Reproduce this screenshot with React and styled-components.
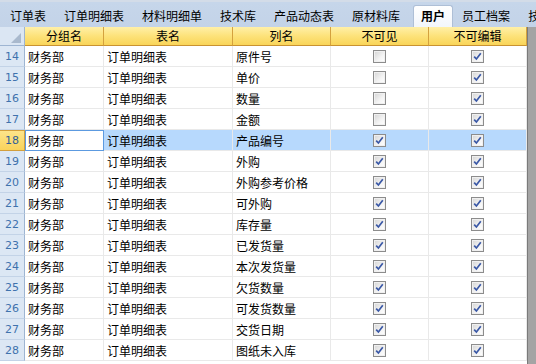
import React from "react";
import styled, { createGlobalStyle } from "styled-components";

const GlobalStyle = createGlobalStyle`
  html, body {
    margin: 0;
    padding: 0;
    background: #ffffff;
    overflow: hidden;
  }
  body {
    font-family: "Noto Sans CJK SC", "Liberation Sans", sans-serif;
    font-size: 12px;
  }
`;

const Page = styled.div`
  width: 536px;
  height: 364px;
  display: flex;
  flex-direction: column;
  overflow: hidden;
`;

const TabBar = styled.div`
  height: 27px;
  flex: none;
  display: flex;
  align-items: flex-end;
  padding-left: 1px;
  background: linear-gradient(#d3dce8 0, #d3dce8 2px, #c6d6ea 2px, #c3d3e8 100%);
  white-space: nowrap;
  overflow: hidden;
`;

const Tab = styled.div`
  flex: none;
  height: 21px;
  line-height: 20px;
  padding: 0 9px;
  color: #000;
  box-sizing: border-box;
`;

const ActiveTab = styled(Tab)`
  height: 22px;
  padding: 0 7px;
  margin-left: 4px;
  font-weight: 700;
  border-radius: 3px 3px 0 0;
  background: linear-gradient(#ffffff, #f2f6fb);
  border: 1px solid #aebfd6;
  border-bottom: none;
`;

const Body = styled.div`
  flex: 1;
  display: flex;
  min-height: 0;
`;

const Grid = styled.div`
  width: 527px;
  flex: none;
  display: flex;
  flex-direction: column;
  overflow: hidden;
`;

const ScrollStrip = styled.div`
  flex: 1;
  background: #a4a4a4;
  border-left: 1px solid #7a7a7a;
`;

const COLS = "25px 79px 129px 98px 98px 98px";

const HeaderRow = styled.div`
  display: grid;
  grid-template-columns: ${COLS};
  height: 19px;
  flex: none;
`;

const Corner = styled.div`
  position: relative;
  box-sizing: border-box;
  background: #dbe6f3;
  border-right: 1px solid #9eb5d2;
  border-bottom: 1px solid #9eb5d2;
`;

const CornerMark = styled.svg`
  position: absolute;
  right: 3px;
  bottom: 2px;
`;

const HeadCell = styled.div`
  box-sizing: border-box;
  display: flex;
  align-items: center;
  justify-content: center;
  background: linear-gradient(#fff0a8, #fde27a 50%, #f9d559);
  border-right: 1px solid #d4a13e;
  border-bottom: 1px solid #c99231;
  color: #000;
  line-height: 1;
`;

const Row = styled.div`
  display: grid;
  grid-template-columns: ${COLS};
  height: 21px;
  flex: none;
  background: ${(p) => (p.$selected ? "#b7d9fd" : "#ffffff")};
`;

const RowNum = styled.div`
  box-sizing: border-box;
  display: flex;
  align-items: center;
  justify-content: center;
  font-family: "DejaVu Sans", "Liberation Sans", sans-serif;
  font-size: 11px;
  color: ${(p) => (p.$selected ? "#2f5f99" : "#3f72ad")};
  background: ${(p) =>
    p.$selected ? "linear-gradient(#fde48a, #f9d35b)" : "#dce7f4"};
  border-right: 1px solid ${(p) => (p.$selected ? "#d39f3c" : "#9eb5d2")};
  border-bottom: 1px solid ${(p) => (p.$selected ? "#d39f3c" : "#c3d3e7")};
  border-top: ${(p) => (p.$selected ? "1px solid #d39f3c" : "none")};
`;

const Cell = styled.div`
  box-sizing: border-box;
  display: flex;
  align-items: center;
  justify-content: ${(p) => (p.$center ? "center" : "flex-start")};
  padding-left: ${(p) => (p.$center ? "0" : "3px")};
  border-right: 1px solid #e9e9e9;
  border-bottom: 1px solid #e9e9e9;
  color: #000;
  white-space: nowrap;
  overflow: hidden;
  ${(p) =>
    p.$focused &&
    `
    background: #ffffff;
    border: 1px solid #5c9ae0;
    padding-left: 2px;
  `}
`;

const Box = styled.span`
  width: 13px;
  height: 13px;
  box-sizing: border-box;
  border: 1px solid #8c8c8c;
  background: linear-gradient(135deg, #d4d4d4, #f4f4f4 60%, #ffffff);
  display: flex;
  align-items: center;
  justify-content: center;
  box-shadow: inset 0 0 0 1px #f0f0f0;
`;

const Check = ({ checked }) => (
  <Box>
    {checked && (
      <svg width="9" height="9" viewBox="0 0 9 9">
        <path
          d="M1.2 4.6 L3.4 7 L7.8 1.2"
          fill="none"
          stroke="#3a58a6"
          strokeWidth="1.7"
        />
      </svg>
    )}
  </Box>
);

const tabs = [
  "订单表",
  "订单明细表",
  "材料明细单",
  "技术库",
  "产品动态表",
  "原材料库",
  "用户",
  "员工档案",
  "技术文档",
];

const columns = ["分组名", "表名", "列名", "不可见", "不可编辑"];

const rows = [
  { n: 14, col: "原件号", hidden: false },
  { n: 15, col: "单价", hidden: false },
  { n: 16, col: "数量", hidden: false },
  { n: 17, col: "金额", hidden: false },
  { n: 18, col: "产品编号", hidden: true },
  { n: 19, col: "外购", hidden: true },
  { n: 20, col: "外购参考价格", hidden: true },
  { n: 21, col: "可外购", hidden: true },
  { n: 22, col: "库存量", hidden: true },
  { n: 23, col: "已发货量", hidden: true },
  { n: 24, col: "本次发货量", hidden: true },
  { n: 25, col: "欠货数量", hidden: true },
  { n: 26, col: "可发货数量", hidden: true },
  { n: 27, col: "交货日期", hidden: true },
  { n: 28, col: "图纸未入库", hidden: true },
];

export default function App() {
  return (
    <>
      <GlobalStyle />
      <Page>
        <TabBar>
          {tabs.map((t) =>
            t === "用户" ? (
              <ActiveTab key={t}>{t}</ActiveTab>
            ) : (
              <Tab key={t}>{t}</Tab>
            )
          )}
        </TabBar>
        <Body>
          <Grid>
            <HeaderRow>
              <Corner>
                <CornerMark width="10" height="10" viewBox="0 0 10 10">
                  <polygon points="10,0 10,10 0,10" fill="#a9b9cd" />
                </CornerMark>
              </Corner>
              {columns.map((c) => (
                <HeadCell key={c}>{c}</HeadCell>
              ))}
            </HeaderRow>
            {rows.map((r) => {
              const selected = r.n === 18;
              return (
                <Row key={r.n} $selected={selected}>
                  <RowNum $selected={selected}>{r.n}</RowNum>
                  <Cell $focused={selected}>财务部</Cell>
                  <Cell>订单明细表</Cell>
                  <Cell>{r.col}</Cell>
                  <Cell $center>
                    <Check checked={r.hidden} />
                  </Cell>
                  <Cell $center>
                    <Check checked />
                  </Cell>
                </Row>
              );
            })}
          </Grid>
          <ScrollStrip />
        </Body>
      </Page>
    </>
  );
}
